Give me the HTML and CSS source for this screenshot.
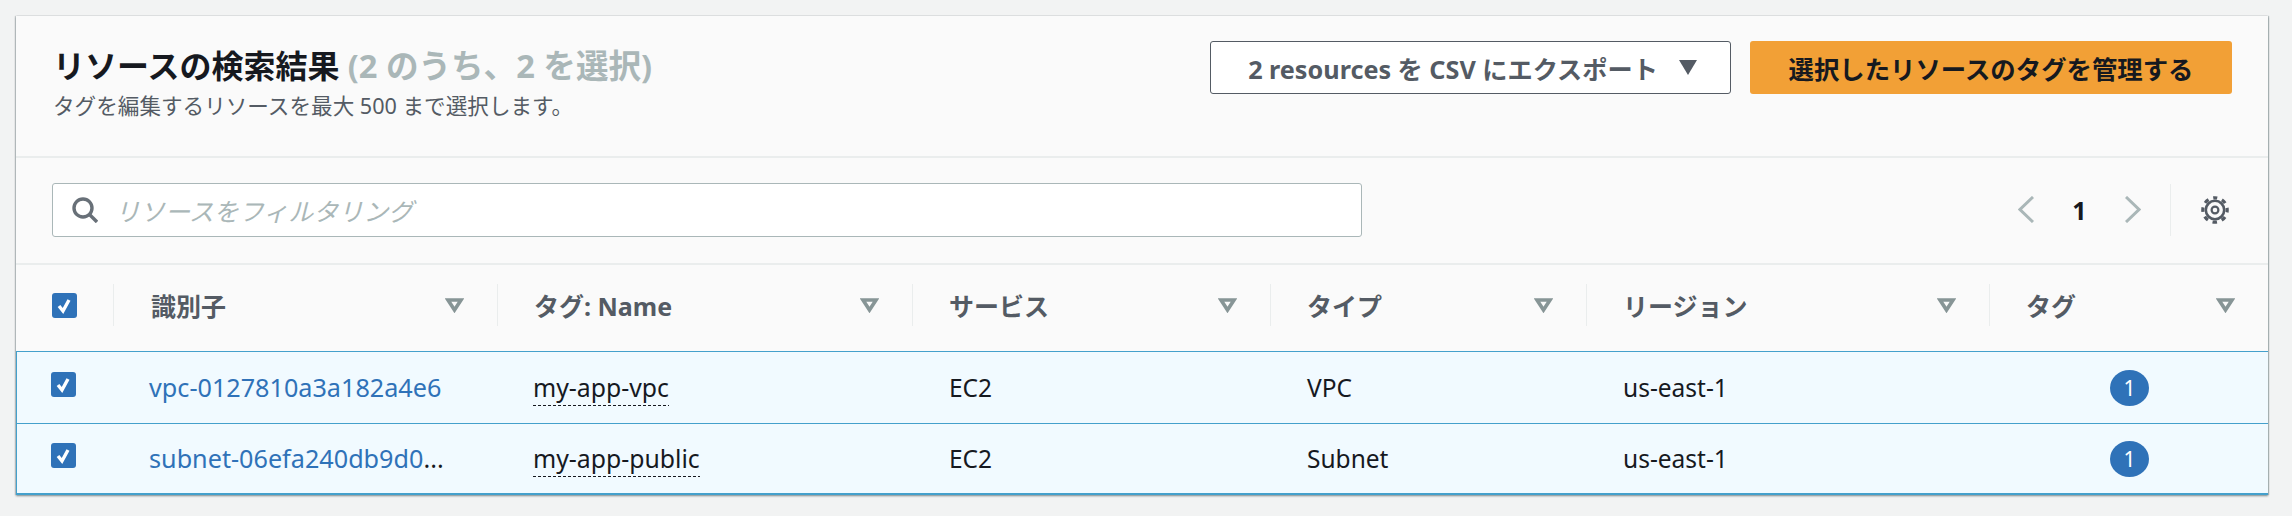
FILE: index.html
```html
<!DOCTYPE html>
<html lang="ja">
<head>
<meta charset="utf-8">
<title>リソースの検索結果</title>
<link rel="stylesheet" href="styles.css">
</head>
<body>
<section class="card">
  <header class="head">
    <div class="head-text">
      <h2 class="title">リソースの検索結果 <span class="count">(2 のうち、2 を選択)</span></h2>
      <p class="desc">タグを編集するリソースを最大 500 まで選択します。</p>
    </div>
    <div class="actions">
      <button class="btn btn-export">2 resources を CSV にエクスポート<svg class="caret" viewBox="0 0 18 15"><path d="M0 0H18L9 15Z"/></svg></button>
      <button class="btn btn-primary">選択したリソースのタグを管理する</button>
    </div>
  </header>
  <div class="toolbar">
    <div class="search">
      <svg class="search-icon" viewBox="0 0 26 26"><circle cx="11" cy="11" r="9" fill="none" stroke="#687078" stroke-width="3.4"/><path d="M17.5 17.5L25 25" fill="none" stroke="#687078" stroke-width="3.4"/></svg>
      <span class="placeholder">リソースをフィルタリング</span>
    </div>
    <div class="pager">
      <svg class="chev" viewBox="0 0 16 27"><path d="M15 1L2 13.5L15 26" fill="none" stroke="#aab7b8" stroke-width="3"/></svg>
      <span class="page">1</span>
      <svg class="chev" viewBox="0 0 16 27"><path d="M1 1L14 13.5L1 26" fill="none" stroke="#aab7b8" stroke-width="3"/></svg>
    </div>
    <div class="settings">
      <svg class="gear" viewBox="0 0 28 28"><circle cx="14" cy="14" r="12.2" fill="none" stroke="#545b64" stroke-width="3.2" stroke-dasharray="4.6 4.98" stroke-dashoffset="2.3" transform="rotate(-90 14 14)"/><circle cx="14" cy="14" r="9.2" fill="none" stroke="#545b64" stroke-width="2.6"/><circle cx="14" cy="14" r="3.4" fill="none" stroke="#545b64" stroke-width="2.2"/></svg>
    </div>
  </div>
  <div class="table">
    <div class="row row-head">
      <div class="cell cell-check"><span class="check"><svg viewBox="0 0 25 25"><path d="M7 13l4 5 6-11" fill="none" stroke="#fff" stroke-width="3.4"/></svg></span></div>
      <div class="cell th"><span>識別子</span><svg class="filter" viewBox="0 0 19 15"><path d="M3 2H16L9.5 12Z"/></svg></div>
      <div class="cell th"><span>タグ: Name</span><svg class="filter" viewBox="0 0 19 15"><path d="M3 2H16L9.5 12Z"/></svg></div>
      <div class="cell th"><span>サービス</span><svg class="filter" viewBox="0 0 19 15"><path d="M3 2H16L9.5 12Z"/></svg></div>
      <div class="cell th"><span>タイプ</span><svg class="filter" viewBox="0 0 19 15"><path d="M3 2H16L9.5 12Z"/></svg></div>
      <div class="cell th"><span>リージョン</span><svg class="filter" viewBox="0 0 19 15"><path d="M3 2H16L9.5 12Z"/></svg></div>
      <div class="cell th"><span>タグ</span><svg class="filter" viewBox="0 0 19 15"><path d="M3 2H16L9.5 12Z"/></svg></div>
    </div>
    <div class="row row-sel">
      <div class="cell cell-check"><span class="check"><svg viewBox="0 0 25 25"><path d="M7 13l4 5 6-11" fill="none" stroke="#fff" stroke-width="3.4"/></svg></span></div>
      <div class="cell td"><a class="link">vpc-0127810a3a182a4e6</a></div>
      <div class="cell td"><span class="dashed">my-app-vpc</span></div>
      <div class="cell td">EC2</div>
      <div class="cell td">VPC</div>
      <div class="cell td">us-east-1</div>
      <div class="cell td td-badge"><span class="badge">1</span></div>
    </div>
    <div class="row row-sel row-last">
      <div class="cell cell-check"><span class="check"><svg viewBox="0 0 25 25"><path d="M7 13l4 5 6-11" fill="none" stroke="#fff" stroke-width="3.4"/></svg></span></div>
      <div class="cell td"><a class="link">subnet-06efa240db9d0<span class="ell">...</span></a></div>
      <div class="cell td"><span class="dashed">my-app-public</span></div>
      <div class="cell td">EC2</div>
      <div class="cell td">Subnet</div>
      <div class="cell td">us-east-1</div>
      <div class="cell td td-badge"><span class="badge">1</span></div>
    </div>
  </div>
</section>
</body>
</html>
```
FILE: styles.css
```css
* { box-sizing: border-box; }
html, body { height: 100%; }
body {
  margin: 0;
  padding: 16px 24px 0 16px;
  background: #f2f3f3;
  color: #16191f;
  font-family: "Noto Sans", "Noto Sans CJK JP", sans-serif;
  overflow: hidden;
}
.card {
  background: #fafafa;
  height: 479px;
  display: flex;
  flex-direction: column;
  box-shadow: 0 1px 2px 0 rgba(0, 28, 36, .45), 1px 0 1px 0 rgba(0, 28, 36, .2), -1px 0 1px 0 rgba(0, 28, 36, .15);
}
.head {
  height: 142px;
  flex: none;
  display: flex;
  justify-content: space-between;
  padding: 25px 36px 0 37px;
  border-bottom: 2px solid #eaeded;
}
.title {
  margin: -2px 0 0;
  font-size: 32px;
  line-height: 54px;
  font-weight: 700;
}
.count { color: #aab7b8; font-size: 32.6px; }
.desc {
  margin: -2px 0 0;
  font-size: 21.6px;
  line-height: 30px;
  color: #545b64;
}
.actions {
  display: flex;
  gap: 19px;
}
.btn {
  height: 53px;
  border-radius: 3px;
  font-family: inherit;
  font-size: 25.4px;
  font-weight: 700;
  padding: 0;
}
.btn-export {
  width: 521px;
  background: #fff;
  border: 1.5px solid #545b64;
  color: #545b64;
  display: flex;
  align-items: center;
  justify-content: center;
  gap: 21px;
  padding-left: 4px;
  font-size: 25.2px;
}
.caret { width: 18px; height: 15px; fill: #545b64; }
.btn-primary {
  width: 482px;
  background: #f2a036;
  border: none;
  color: #16191f;
}
.toolbar {
  height: 107px;
  flex: none;
  display: flex;
  align-items: center;
  padding: 0 39px 2px 36px;
  border-bottom: 2px solid #eaeded;
}
.search {
  width: 1310px;
  height: 54px;
  display: flex;
  align-items: center;
  gap: 17px;
  padding-left: 19px;
  background: #fff;
  border: 1.5px solid #aab7b8;
  border-radius: 3px;
}
.search-icon { width: 26px; height: 26px; flex: none; }
.placeholder { font-size: 25px; font-style: italic; color: #aab7b8; }
.pager {
  margin-left: auto;
  display: flex;
  align-items: center;
}
.chev { width: 16px; height: 27px; }
.page { width: 91px; text-align: center; font-size: 25px; font-weight: 700; }
.settings {
  height: 52px;
  margin-left: 29px;
  padding-left: 30px;
  display: flex;
  align-items: center;
  border-left: 1px solid #eaeded;
}
.gear { width: 28px; height: 28px; }
.table { flex: 1; display: flex; flex-direction: column; }
.row {
  display: grid;
  grid-template-columns: 97px 384px 415px 358px 316px 403px 279px;
  align-items: center;
}
.row-head { height: 86px; padding-bottom: 6px; }
.row-sel {
  height: 72px;
  background: #f1faff;
  border-top: 1px solid #44a0cc;
  border-left: 1px solid #44a0cc;
}
.row-last { border-bottom: 2px solid #44a0cc; }
.cell { min-width: 0; }
.cell-check { padding-left: 36px; display: flex; }
.row-sel .cell-check { padding-left: 34px; margin-top: -7px; }
.check {
  width: 25px;
  height: 25px;
  border-radius: 3px;
  background: #2f72b8;
  display: block;
}
.check svg { display: block; }
.th {
  height: 42px;
  display: flex;
  align-items: center;
  justify-content: space-between;
  padding: 0 33px 0 36px;
  border-left: 1px solid #eaeded;
  font-size: 25px;
  font-weight: 700;
  color: #545b64;
}
.row-head .th:nth-child(2) { padding-left: 37px; }
.filter { width: 19px; height: 15px; fill: none; stroke: #879596; stroke-width: 3.6; }
.td { padding-left: 36px; font-size: 24.5px; line-height: 36px; }
.row-sel .td:nth-child(2) { padding-left: 35px; }
.row-sel .td:nth-child(3) { padding-left: 35px; }
.link { color: #2f72b8; font-size: 25.2px; }
.ell { color: #16191f; }
.dashed {
  display: inline-block;
  line-height: 36px;
  padding-bottom: 1px;
  font-size: 24.8px;
  background: repeating-linear-gradient(90deg, #16191f 0 3px, transparent 3px 5px) left bottom / 100% 1.5px no-repeat;
}
.td-badge { padding-left: 120px; }
.badge {
  display: block;
  width: 39px;
  height: 36px;
  border-radius: 50%;
  background: #2f72b8;
  color: #fff;
  font-size: 21px;
  line-height: 36px;
  text-align: center;
}
```
